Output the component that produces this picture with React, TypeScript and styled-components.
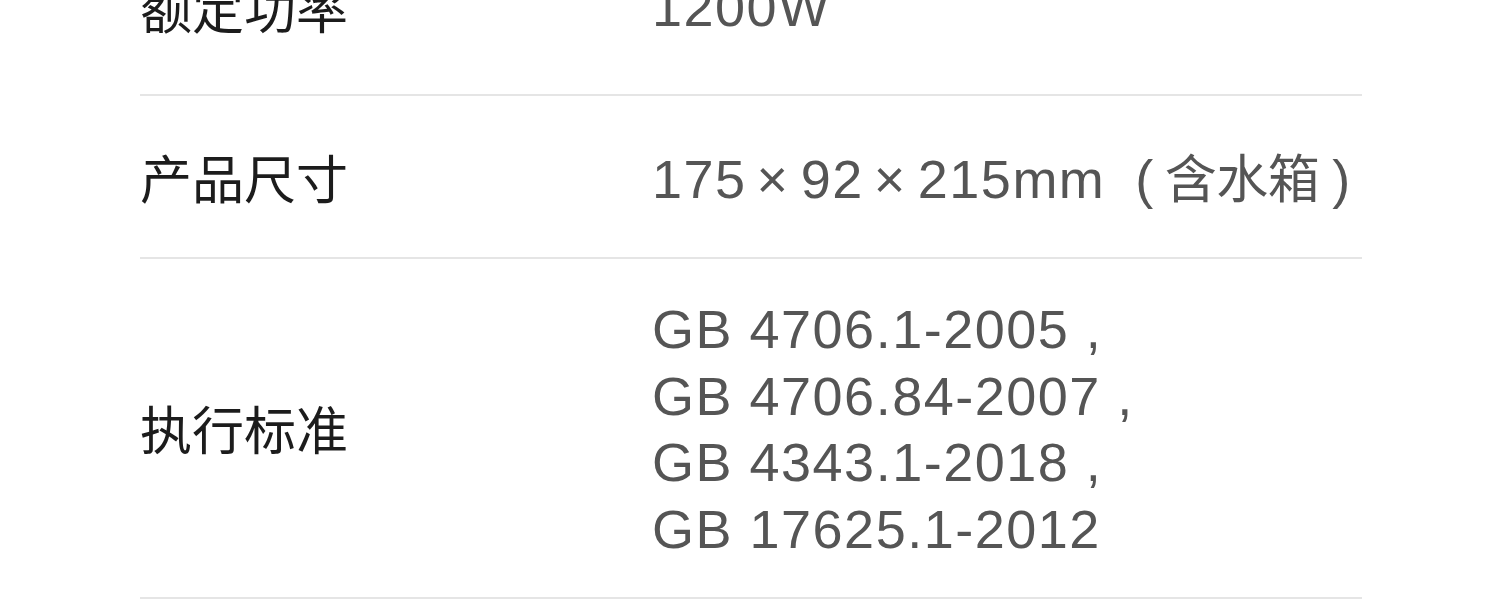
import React from 'react';
import styled, { createGlobalStyle } from 'styled-components';

const GlobalStyle = createGlobalStyle`
  html, body {
    margin: 0;
    padding: 0;
    background: #ffffff;
    overflow: hidden;
  }
`;

const Page = styled.div`
  width: 1500px;
  height: 600px;
  overflow: hidden;
  background: #fff;
`;

const SpecList = styled.div`
  margin: -67px 0 0 140px;
  width: 1222px;
`;

const SpecRow = styled.div`
  display: grid;
  grid-template-columns: 512px 1fr;
  align-items: center;
  box-sizing: border-box;
  min-height: 163px;
  padding: 37px 0 35px;
  border-bottom: 2px solid #e5e5e5;

  &:first-child {
    padding: 30px 0 42px;
  }
`;

const Label = styled.div`
  font-family: 'Noto Sans CJK SC', 'Liberation Sans', sans-serif;
  font-size: 52px;
  line-height: 66px;
  color: #1c1c1c;
  margin-top: -2px;
`;

const Value = styled.div`
  font-family: 'Liberation Sans', 'Noto Sans CJK SC', sans-serif;
  font-size: 54px;
  line-height: 66.5px;
  letter-spacing: 1.5px;
  color: #555555;
`;

const Line = styled.div`
  white-space: nowrap;
`;

const Times = styled.span`
  margin: 0 11px 0 10px;
`;

const Paren = styled.span<{ $side: 'open' | 'close' }>`
  margin: ${p => (p.$side === 'open' ? '0 10px 0 30px' : '0 0 0 13px')};
`;

const Cjk = styled.span`
  font-family: 'Noto Sans CJK SC', sans-serif;
  font-size: 52px;
  letter-spacing: -0.5px;
`;

type Spec = { label: string; lines: React.ReactNode[] };

const specs: Spec[] = [
  { label: '额定功率', lines: ['1200W'] },
  {
    label: '产品尺寸',
    lines: [
      <>
        175<Times>×</Times>92<Times>×</Times>215mm
        <Paren $side="open">(</Paren>
        <Cjk>含水箱</Cjk>
        <Paren $side="close">)</Paren>
      </>,
    ],
  },
  {
    label: '执行标准',
    lines: [
      'GB 4706.1-2005 ,',
      'GB 4706.84-2007 ,',
      'GB 4343.1-2018 ,',
      'GB 17625.1-2012',
    ],
  },
];

export default function App() {
  return (
    <Page>
      <GlobalStyle />
      <SpecList>
        {specs.map(spec => (
          <SpecRow key={spec.label}>
            <Label>{spec.label}</Label>
            <Value>
              {spec.lines.map((line, i) => (
                <Line key={i}>{line}</Line>
              ))}
            </Value>
          </SpecRow>
        ))}
      </SpecList>
    </Page>
  );
}
